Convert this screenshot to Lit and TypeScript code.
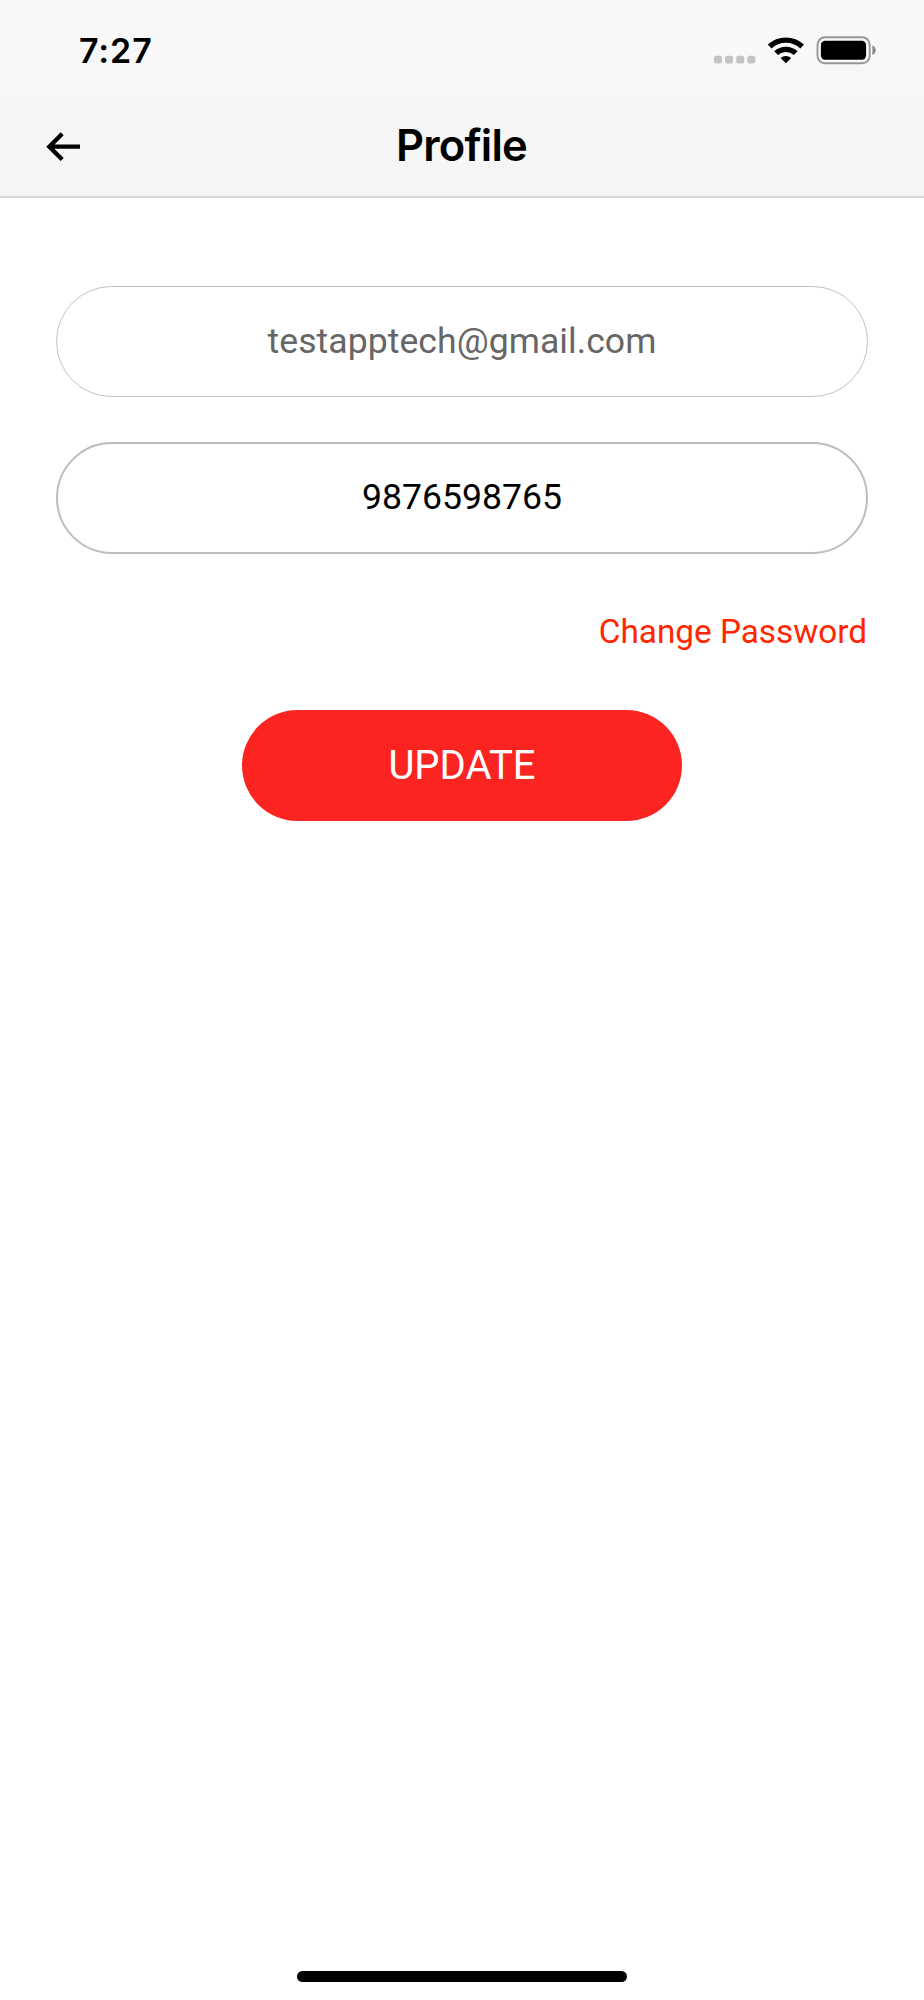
import { LitElement, html, css } from 'lit';
import { customElement, property } from 'lit/decorators.js';

@customElement('status-bar')
export class StatusBar extends LitElement {
  static styles = css`
    :host {
      display: flex;
      justify-content: space-between;
      height: 100px;
      box-sizing: border-box;
      padding: 30px 47px 0 79px;
    }

    .time {
      font: 600 34px/42px Inter, 'Liberation Sans', sans-serif;
      letter-spacing: 0.9px;
    }

    svg {
      display: block;
    }
  `;

  @property() time = '';

  render() {
    return html`
      <div class="time">${this.time}</div>
      <svg width="164" height="40" viewBox="713 30 164 40">
        <g fill="#c4c4c4">
          <rect x="714" y="55.8" width="8" height="7.6" rx="2.2" />
          <rect x="725" y="55.8" width="8" height="7.6" rx="2.2" />
          <rect x="736.2" y="55.8" width="8" height="7.6" rx="2.2" />
          <rect x="747.3" y="55.8" width="8" height="7.6" rx="2.2" />
        </g>
        <path d="M767.8 44.6A26.5 26.5 0 0 1 804 44.6L800.3 48.5A21 21 0 0 0 771.5 48.5Z" />
        <path d="M774.2 51.3A17 17 0 0 1 797.6 51.3L793.8 55.1A11.6 11.6 0 0 0 778 55.1Z" />
        <path d="M780.6 58A8 8 0 0 1 791.2 58L785.9 63.3Z" />
        <rect x="817.5" y="37.3" width="52.2" height="26" rx="7.5" fill="none" stroke="#959595" stroke-width="1.9" />
        <rect x="820.9" y="40.8" width="45.2" height="19" rx="4.2" />
        <path d="M872.3 45.5Q875.8 47 875.8 50.3T872.3 55.1Z" fill="#8c8c8c" />
      </svg>
    `;
  }
}

@customElement('app-root')
export class AppRoot extends LitElement {
  static styles = css`
    :host {
      display: flex;
      flex-direction: column;
      box-sizing: border-box;
      height: 2000px;
      background: #fff;
      color: #000;
      font-family: Roboto, 'Liberation Sans', sans-serif;
    }

    header {
      box-sizing: border-box;
      height: 198px;
      background: linear-gradient(#f9f9f9, #f5f5f5);
      border-bottom: 2px solid #d9d9d9;
    }

    .nav {
      display: grid;
      grid-template-columns: 1fr auto 1fr;
      align-items: center;
      height: 92px;
      padding: 0 46px 0 45px;
    }

    .back {
      display: block;
      border: none;
      background: none;
      padding: 0;
      width: 36px;
      height: 32px;
    }

    .back svg {
      display: block;
    }

    h1 {
      margin: 0 0 2px;
      font: 600 43.5px/52px Inter, 'Liberation Sans', sans-serif;
      letter-spacing: -0.8px;
    }

    main {
      display: flex;
      flex-direction: column;
      flex: 1;
      padding: 88px 56px 0;
    }

    input {
      box-sizing: border-box;
      width: 100%;
      height: 112px;
      margin: 0 0 45px;
      padding: 0 0 2px;
      border: 2px solid #bdbdbd;
      border-radius: 56px;
      background: #fff;
      color: #000;
      font: 35.6px Roboto, 'Liberation Sans', sans-serif;
      text-align: center;
    }

    input:disabled {
      height: 111px;
      border: 1px solid #c2c2c2;
      color: #666;
      letter-spacing: 0.05px;
    }

    .change {
      align-self: flex-end;
      margin: 13px 1px 0 0;
      color: #ff2600;
      font-size: 33.3px;
      line-height: 40px;
      text-decoration: none;
    }

    .update {
      align-self: center;
      width: 440px;
      height: 111px;
      margin-top: 58px;
      padding: 0;
      border: none;
      border-radius: 56px;
      background: #fc2421;
      color: #fff;
      font: 40px Roboto, 'Liberation Sans', sans-serif;
    }

    .home {
      align-self: center;
      width: 330px;
      height: 11px;
      margin-bottom: 18px;
      border-radius: 6px;
      background: #000;
    }
  `;

  @property() email = 'testapptech@gmail.com';
  @property() phone = '9876598765';

  render() {
    return html`
      <header>
        <status-bar time="7:27"></status-bar>
        <div class="nav">
          <button class="back" aria-label="Back">
            <svg width="36" height="32" viewBox="0 0 36 32" fill="none" stroke="#000" stroke-width="4.3">
              <path d="M35 16.7H4M17.2 3.8L4.3 16.7L17.2 29.6" />
            </svg>
          </button>
          <h1>Profile</h1>
        </div>
      </header>
      <main>
        <input type="text" .value=${this.email} disabled>
        <input type="text" .value=${this.phone}>
        <a class="change">Change Password</a>
        <button class="update">UPDATE</button>
      </main>
      <div class="home"></div>
    `;
  }
}
